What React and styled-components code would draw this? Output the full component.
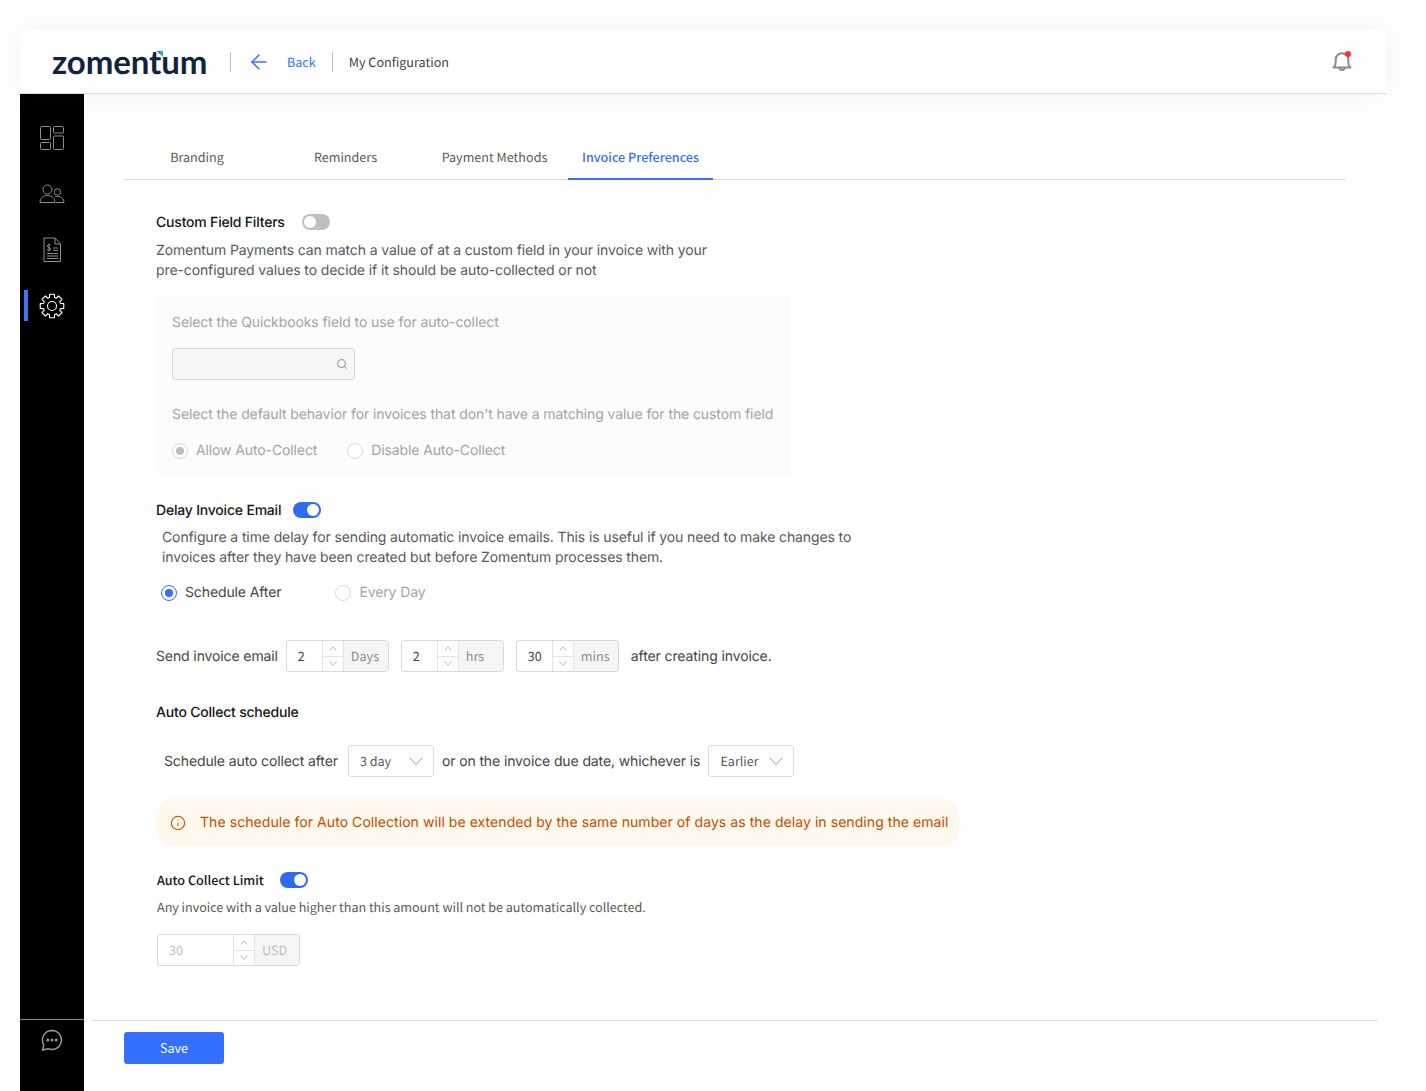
import React from 'react';
import styled, { createGlobalStyle } from 'styled-components';
import { ArrowLeft, Info, Search } from 'lucide-react';

const Global = createGlobalStyle`
  html, body { margin: 0; padding: 0; background: #fff; }
  body {
    font-family: Inter, "Liberation Sans", sans-serif;
    text-rendering: geometricPrecision;
    -webkit-font-smoothing: antialiased;
  }
  * { box-sizing: border-box; }
`;

const source = `"Noto Sans CJK SC", "Noto Sans", sans-serif`;

const Chevron = ({ up, size = 8, color = '#a8a8a8' }) => (
  <svg width={size} height={size * 0.6} viewBox="0 0 10 6" fill="none" stroke={color} strokeWidth={size > 10 ? 0.7 : 1}>
    <path d={up ? 'M1 5.500 5 1l4 4.500' : 'M.5 .5 5 5.500l4.500-5'} />
  </svg>
);

// 8-tooth outline for the settings icon in the sidebar
const gearPath = () => {
  const pts = [];
  for (let i = 0; i < 8; i++) {
    const a = (i * Math.PI) / 4;
    [[-0.3, 8.8], [-0.2, 12], [0.2, 12], [0.3, 8.8]].forEach(([da, r]) => {
      pts.push(`${(13 + r * Math.sin(a + da)).toFixed(2)} ${(13 - r * Math.cos(a + da)).toFixed(2)}`);
    });
  }
  return `M${pts.join('L')}Z`;
};

const NumberBox = ({ value, unit, wide, disabled }) => (
  <NumberWrap>
    <NumberValue $wide={wide} $disabled={disabled}>{value}</NumberValue>
    <Stepper>
      <Step><Chevron up /></Step>
      <Step><Chevron /></Step>
    </Stepper>
    <Addon $disabled={disabled}>{unit}</Addon>
  </NumberWrap>
);

const SelectBox = ({ value, width }) => (
  <Select $width={width}>
    <span>{value}</span>
    <Chevron size={14} color="#9a9a9a" />
  </Select>
);

const App = () => {
  return (
    <Page>
      <Global />
      <Shell>
        <Header>
          <Logo>
            zomentum
            <LogoMark viewBox="0 0 10 10">
              <path d="M0 0h10v10z" fill="#17b8a0" />
              <path d="M0 0h5v5z" fill="#2f6fe8" />
            </LogoMark>
          </Logo>
          <Divider />
          <BackLink>
            <ArrowLeft size={24} strokeWidth={1.5} />
            <span>Back</span>
          </BackLink>
          <Divider $tight />
          <Crumb>My Configuration</Crumb>
          <Bell>
            <svg width="20" height="22" viewBox="0 0 20 22" fill="none" stroke="#8c8c8c" strokeWidth="2">
              <path d="M1.500 16.500h17c-1.600-1.400-2.200-2.600-2.200-5V8.500a6.300 6.300 0 0 0-12.600 0v3c0 2.400-.6 3.600-2.200 5Z" strokeLinejoin="round" />
              <path d="M7.300 17a2.800 2.800 0 0 0 5.400 0" />
            </svg>
            <BellDot />
          </Bell>
        </Header>
        <Body>
          <Sidebar>
            <NavItem>
              <svg width="26" height="26" viewBox="0 0 26 26" fill="none" stroke="#8f8f8f" strokeWidth="1">
                <rect x="1.500" y="1.500" width="10" height="13" rx="1" />
                <rect x="14.500" y="1.500" width="10" height="6.500" rx="1" />
                <rect x="1.500" y="17.500" width="10" height="7" rx="1" />
                <rect x="14.500" y="11" width="10" height="13.500" rx="1" />
              </svg>
            </NavItem>
            <NavItem>
              <svg width="26" height="20" viewBox="0 0 26 20" fill="none" stroke="#8f8f8f" strokeWidth="1">
                <circle cx="8.500" cy="5.500" r="4.500" />
                <path d="M1 18.500c0-4 3-7 7.500-7s7.500 3 7.500 7Z" />
                <circle cx="18.500" cy="8" r="3.200" />
                <path d="M17 18.500h8c0-3.600-2.400-6-6.500-6-1 0-1.700.1-2.500.5" />
              </svg>
            </NavItem>
            <NavItem>
              <svg width="20" height="26" viewBox="0 0 20 26" fill="none" stroke="#8f8f8f" strokeWidth="1">
                <path d="M2 1h11l5.500 6v17.500H2Z" />
                <path d="M13 1v6h5.500M5 16.500h11M5 19h11M5 21.500h11M11 13.500h5M11 11h5" />
                <path d="M8.500 8.500c-.6-1-3-1-3.200.5-.2 1.800 3.400 1.300 3.300 3.100-.1 1.500-2.800 1.500-3.500.3M7 6.500v8" />
              </svg>
            </NavItem>
            <NavItem $active>
              <svg width="26" height="26" viewBox="0 0 26 26" fill="none" stroke="#fff" strokeWidth="1.100" strokeLinejoin="round">
                <path d={gearPath()} />
                <circle cx="13" cy="13" r="4.500" />
              </svg>
            </NavItem>
            <SideBottom>
              <svg width="24" height="24" viewBox="0 0 24 24" fill="none" stroke="#9a9a9a" strokeWidth="1.400">
                <path d="M12 2.500a9.500 9.500 0 1 1-3.900 18.200L2.500 22l1.300-5.200A9.500 9.500 0 0 1 12 2.500Z" strokeLinejoin="round" />
                <circle cx="7.800" cy="12" r=".8" fill="#9a9a9a" />
                <circle cx="12" cy="12" r=".8" fill="#9a9a9a" />
                <circle cx="16.200" cy="12" r=".8" fill="#9a9a9a" />
              </svg>
            </SideBottom>
          </Sidebar>
          <Main>
            <Tabs>
              <Tab>Branding</Tab>
              <Tab>Reminders</Tab>
              <Tab>Payment Methods</Tab>
              <Tab $active>Invoice Preferences</Tab>
            </Tabs>
            <Content>
              <TitleRow>
                <Title>Custom Field Filters</Title>
                <Toggle />
              </TitleRow>
              <Text>
                Zomentum Payments can match a value of at a custom field in your invoice with your
                <br />
                pre-configured values to decide if it should be auto-collected or not
              </Text>
              <DisabledPanel>
                <Muted>Select the Quickbooks field to use for auto-collect</Muted>
                <SearchBox>
                  <Search size={12} color="#8c8c8c" strokeWidth={2} />
                </SearchBox>
                <Muted>Select the default behavior for invoices that don't have a matching value for the custom field</Muted>
                <PanelRadios>
                  <RadioLabel $muted>
                    <Radio $dim $checked />
                    Allow Auto-Collect
                  </RadioLabel>
                  <RadioLabel $muted>
                    <Radio $dim />
                    Disable Auto-Collect
                  </RadioLabel>
                </PanelRadios>
              </DisabledPanel>

              <DelayRow>
                <Title>Delay Invoice Email</Title>
                <Toggle $on />
              </DelayRow>
              <DelayText>
                Configure a time delay for sending automatic invoice emails. This is useful if you need to make changes to
                <br />
                invoices after they have been created but before Zomentum processes them.
              </DelayText>
              <DelayRadios>
                <RadioLabel>
                  <Radio $checked />
                  Schedule After
                </RadioLabel>
                <RadioLabel $muted>
                  <Radio $dim />
                  Every Day
                </RadioLabel>
              </DelayRadios>
              <SendRow>
                <InlineText $after={-4}>Send invoice email</InlineText>
                <NumberBox value="2" unit="Days" />
                <NumberBox value="2" unit="hrs" />
                <NumberBox value="30" unit="mins" />
                <InlineText>after creating invoice.</InlineText>
              </SendRow>

              <ScheduleTitle>Auto Collect schedule</ScheduleTitle>
              <ScheduleRow>
                <InlineText $after={2}>Schedule auto collect after</InlineText>
                <SelectBox value="3 day" width={86} />
                <InlineText>or on the invoice due date, whichever is</InlineText>
                <SelectBox value="Earlier" width={86} />
              </ScheduleRow>
              <Alert>
                <Info size={16} strokeWidth={1.600} />
                The schedule for Auto Collection will be extended by the same number of days as the delay in sending the email
              </Alert>

              <LimitRow>
                <LimitTitle>Auto Collect Limit</LimitTitle>
                <Toggle $on />
              </LimitRow>
              <LimitText>Any invoice with a value higher than this amount will not be automatically collected.</LimitText>
              <LimitInput>
                <NumberBox value="30" unit="USD" wide disabled />
              </LimitInput>
            </Content>
            <Footer>
              <SaveButton>Save</SaveButton>
            </Footer>
          </Main>
        </Body>
      </Shell>
    </Page>
  );
};

const Page = styled.div`
  width: 1426px;
  height: 1091px;
  padding: 30px 40px 0 20px;
  overflow: hidden;
`;
const Shell = styled.div`
  display: flex;
  flex-direction: column;
  height: 1061px;
`;
const Header = styled.header`
  position: relative;
  z-index: 1;
  display: flex;
  align-items: center;
  flex: none;
  height: 64px;
  padding-left: 32px;
  background: #fff;
  border-bottom: 1px solid #d9d9d9;
  box-shadow: 0 0 32px rgba(70, 90, 140, 0.08);
`;
const Logo = styled.div`
  position: relative;
  width: 178px;
  font-family: Lato, sans-serif;
  font-weight: 700;
  font-size: 33px;
  line-height: 64px;
  letter-spacing: -0.1px;
  color: #10233f;
`;
const LogoMark = styled.svg`
  position: absolute;
  left: 105px;
  top: 21px;
  width: 6px;
  height: 6px;
`;
const Divider = styled.span`
  width: 1px;
  height: 20px;
  margin-left: ${(p) => (p.$tight ? '16px' : '0')};
  background: #bfbfbf;
`;
const BackLink = styled.div`
  display: flex;
  align-items: center;
  gap: 16px;
  margin-left: 16px;
  font-family: ${source};
  font-size: 12.6px;
  color: #3370ff;
`;
const Crumb = styled.div`
  margin-left: 16px;
  font-family: ${source};
  font-size: 12.6px;
  color: #434343;
`;
const Bell = styled.div`
  position: relative;
  display: flex;
  margin-left: auto;
  margin-right: 34px;
`;
const BellDot = styled.span`
  position: absolute;
  top: 0;
  right: 1px;
  width: 6px;
  height: 6px;
  border-radius: 50%;
  background: #f5323f;
`;
const Body = styled.div`
  display: flex;
  flex: 1;
  min-height: 0;
`;
const Sidebar = styled.nav`
  display: flex;
  flex-direction: column;
  align-items: center;
  flex: none;
  width: 64px;
  padding-top: 16px;
  background: #000;
`;
const NavItem = styled.div`
  position: relative;
  display: flex;
  align-items: center;
  justify-content: center;
  width: 100%;
  height: 56px;
  &::before {
    content: ${(p) => (p.$active ? "''" : 'none')};
    position: absolute;
    left: 4px;
    top: 12px;
    width: 4px;
    height: 31px;
    background: #3f74f5;
  }
`;
const SideBottom = styled.div`
  display: flex;
  justify-content: center;
  width: 100%;
  height: 72px;
  margin-top: auto;
  padding-top: 8px;
  border-top: 1px solid #8c8c8c;
`;
const Main = styled.main`
  display: flex;
  flex-direction: column;
  flex: 1;
  min-width: 0;
  padding-top: 42px;
`;
const Tabs = styled.div`
  display: grid;
  grid-template-columns: 146px 151px 147px 145px;
  height: 44px;
  margin: 0 40px;
  border-bottom: 1px solid #d9d9d9;
`;
const Tab = styled.div`
  height: 44px;
  font-family: ${source};
  font-size: 12.6px;
  line-height: 42px;
  text-align: center;
  color: ${(p) => (p.$active ? '#3370ff' : '#595959')};
  font-weight: ${(p) => (p.$active ? 500 : 400)};
  border-bottom: ${(p) => (p.$active ? '2px solid #3370ff' : 'none')};
`;
const Content = styled.div`
  flex: 1;
  padding: 32px 0 0 72px;
  font-size: 14px;
  letter-spacing: -0.115px;
  color: #595959;
`;
const TitleRow = styled.div`
  display: flex;
  align-items: center;
  gap: 17px;
  height: 20px;
`;
const Title = styled.div`
  font-size: 14px;
  font-weight: 500;
  letter-spacing: -0.2px;
  color: #141414;
`;
const Toggle = styled.span`
  position: relative;
  display: inline-block;
  width: 28px;
  height: 16px;
  border-radius: 8px;
  background: ${(p) => (p.$on ? '#2f6bf0' : '#bfbfbf')};
  &::after {
    content: '';
    position: absolute;
    top: 2px;
    left: ${(p) => (p.$on ? '14px' : '2px')};
    width: 12px;
    height: 12px;
    border-radius: 50%;
    background: #fff;
  }
`;
const Text = styled.p`
  margin: 9px 0 0;
  line-height: 20px;
`;
const DisabledPanel = styled.div`
  width: 634px;
  height: 179px;
  margin-top: 15px;
  padding: 17px 16px 0;
  background: #fcfcfc;
`;
const Muted = styled.div`
  line-height: 20px;
  white-space: nowrap;
  letter-spacing: -0.095px;
  color: #a3a3a3;
`;
const SearchBox = styled.div`
  display: flex;
  align-items: center;
  justify-content: flex-end;
  width: 183px;
  height: 32px;
  margin: 15px 0 25px;
  padding-right: 6px;
  background: #f5f5f5;
  border: 1px solid #d9d9d9;
  border-radius: 3px;
`;
const PanelRadios = styled.div`
  display: flex;
  gap: 30px;
  margin-top: 16px;
`;
const RadioLabel = styled.label`
  display: flex;
  align-items: center;
  gap: 8px;
  line-height: 20px;
  color: ${(p) => (p.$muted ? '#a3a3a3' : '#434343')};
`;
const Radio = styled.span`
  position: relative;
  flex: none;
  width: 16px;
  height: 16px;
  border-radius: 50%;
  background: #fff;
  border: 1px solid ${(p) => (p.$dim ? '#d9d9d9' : p.$checked ? '#3370ff' : '#d9d9d9')};
  &::after {
    content: ${(p) => (p.$checked ? "''" : 'none')};
    position: absolute;
    inset: 3px;
    border-radius: 50%;
    background: ${(p) => (p.$dim ? '#bfbfbf' : '#3370ff')};
  }
`;
const DelayRow = styled(TitleRow)`
  gap: 12px;
  margin-top: 25px;
`;
const DelayText = styled(Text)`
  margin: 8px 0 0 6px;
`;
const DelayRadios = styled.div`
  display: flex;
  gap: 54px;
  margin: 15px 0 0 5px;
`;
const SendRow = styled.div`
  display: flex;
  align-items: center;
  gap: 12px;
  margin-top: 37px;
  height: 32px;
  color: #434343;
`;
const InlineText = styled.span`
  margin-right: ${(p) => p.$after || 0}px;
  color: #434343;
`;
const NumberWrap = styled.div`
  display: flex;
  height: 32px;
  border: 1px solid #d9d9d9;
  border-radius: 3px;
  overflow: hidden;
  background: #fff;
`;
const NumberValue = styled.div`
  width: ${(p) => (p.$wide ? '75px' : '35px')};
  padding-left: 11px;
  font-family: ${source};
  font-size: 12.6px;
  line-height: 30px;
  letter-spacing: 0;
  color: ${(p) => (p.$disabled ? '#bfbfbf' : '#434343')};
`;
const Stepper = styled.div`
  display: flex;
  flex-direction: column;
  flex: none;
  width: 22px;
  border-left: 1px solid #e4e4e4;
  border-right: 1px solid #e4e4e4;
`;
const Step = styled.span`
  display: flex;
  align-items: center;
  justify-content: center;
  flex: 1;
  & + & {
    border-top: 1px solid #e4e4e4;
  }
`;
const Addon = styled.div`
  width: 44px;
  padding-left: 7px;
  font-family: ${source};
  font-size: 12.6px;
  line-height: 30px;
  letter-spacing: 0;
  color: ${(p) => (p.$disabled ? '#bfbfbf' : '#8c8c8c')};
  background: #f5f5f5;
`;
const ScheduleTitle = styled(Title)`
  margin-top: 31px;
  line-height: 20px;
`;
const ScheduleRow = styled.div`
  display: flex;
  align-items: center;
  gap: 8px;
  height: 32px;
  margin: 22px 0 0 8px;
`;
const Select = styled.div`
  display: flex;
  align-items: center;
  justify-content: space-between;
  width: ${(p) => p.$width}px;
  height: 32px;
  padding: 0 10px 0 11px;
  font-family: ${source};
  font-size: 12.6px;
  letter-spacing: 0;
  color: #595959;
  background: #fff;
  border: 1px solid #d9d9d9;
  border-radius: 3px;
  span {
    margin-top: -2px;
  }
`;
const Alert = styled.div`
  display: flex;
  align-items: center;
  gap: 14px;
  width: 803px;
  height: 47px;
  margin-top: 22px;
  padding-left: 14px;
  font-size: 14px;
  letter-spacing: 0.065px;
  color: #c44b00;
  background: #fff8ec;
  border-radius: 16px;
`;
const LimitRow = styled(TitleRow)`
  gap: 16px;
  margin: 24px 0 0 1px;
`;
const LimitTitle = styled.div`
  margin-top: -2px;
  font-family: ${source};
  font-size: 12.6px;
  font-weight: 500;
  letter-spacing: 0;
  color: #141414;
`;
const LimitText = styled.p`
  margin: 7px 0 0 1px;
  font-family: ${source};
  font-size: 12.6px;
  line-height: 20px;
  letter-spacing: -0.03px;
  color: #595959;
`;
const LimitInput = styled.div`
  display: flex;
  margin: 17px 0 0 1px;
`;
const Footer = styled.div`
  flex: none;
  height: 71px;
  margin: 0 8px;
  padding: 11px 0 0 32px;
  border-top: 1px solid #d9d9d9;
`;
const SaveButton = styled.button`
  display: block;
  width: 100px;
  height: 32px;
  padding: 0 0 2px;
  font-family: ${source};
  font-size: 12.6px;
  color: #fff;
  background: #3370ff;
  border: none;
  border-radius: 3px;
`;

export default App;
